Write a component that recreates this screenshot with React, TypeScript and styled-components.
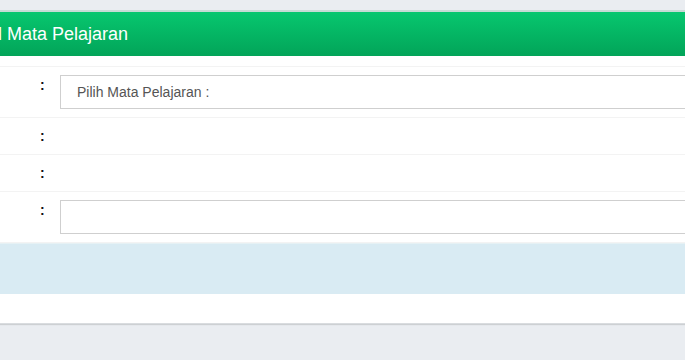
import styled, { createGlobalStyle } from "styled-components"

const GlobalStyle = createGlobalStyle`
    html, body {
        margin: 0;
        padding: 0;
        background: #eaedf1;
        font-family: "Liberation Sans", Arial, sans-serif;
        overflow: hidden;
    }
`

const Page = styled.div`
    width: 685px;
    height: 360px;
    padding-top: 10px;
    box-sizing: border-box;
    overflow: hidden;
`

const Panel = styled.section`
    margin-left: -69px;
    width: 1000px;
    background: #fff;
    border-top: 2px solid #c6dbd5;
    box-shadow: 0 1px 1px rgba(0, 0, 0, 0.12);
    border-bottom: 1px solid #d9dcdf;
`

const Header = styled.header`
    height: 44px;
    display: flex;
    align-items: center;
    padding: 0 15px;
    background: linear-gradient(to bottom, #07c76f, #02a459);
    color: #fff;
    font-size: 18px;
`

const Body = styled.div`
    padding: 10px 15px 0;
`

const Table = styled.div`
    border-top: 1px solid #f3f3f3;
`

const Row = styled.div`
    display: grid;
    grid-template-columns: 94px 20px 1fr;
    border-bottom: 1px solid #f3f3f3;
    min-height: 36px;
`

const Cell = styled.div`
    padding: 8px 0;
    font-size: 14px;
    line-height: 20px;
    color: #333;
`

const Colon = styled(Cell)`
    padding-left: 0;
    color: #111;
    font-weight: bold;
`

const Field = styled.div`
    height: 34px;
    box-sizing: border-box;
    border: 1px solid #cfcfcf;
    padding: 0 16px;
    display: flex;
    align-items: center;
    font-size: 14px;
    color: #555;
    background: #fff;
`

const Footer = styled.div`
    height: 50px;
    background: #d9ebf3;
    border-top: 1px solid #e6f1f4;
`

const Spacer = styled.div`
    height: 29px;
`

const fields: { label: string; kind: "select" | "text" | "input"; placeholder?: string }[] = [
    { label: "", kind: "select", placeholder: "Pilih Mata Pelajaran :" },
    { label: "", kind: "text" },
    { label: "", kind: "text" },
    { label: "", kind: "input" },
]

export default function App() {
    return (
        <>
            <GlobalStyle />
            <Page>
                <Panel>
                    <Header>Jadwal Mata Pelajaran</Header>
                    <Body>
                        <Table>
                            {fields.map((f, i) => (
                                <Row key={i}>
                                    <Cell>{f.label}</Cell>
                                    <Colon>:</Colon>
                                    <Cell>
                                        {f.kind === "select" && <Field>{f.placeholder}</Field>}
                                        {f.kind === "input" && <Field />}
                                    </Cell>
                                </Row>
                            ))}
                        </Table>
                    </Body>
                    <Footer />
                    <Spacer />
                </Panel>
            </Page>
        </>
    )
}
